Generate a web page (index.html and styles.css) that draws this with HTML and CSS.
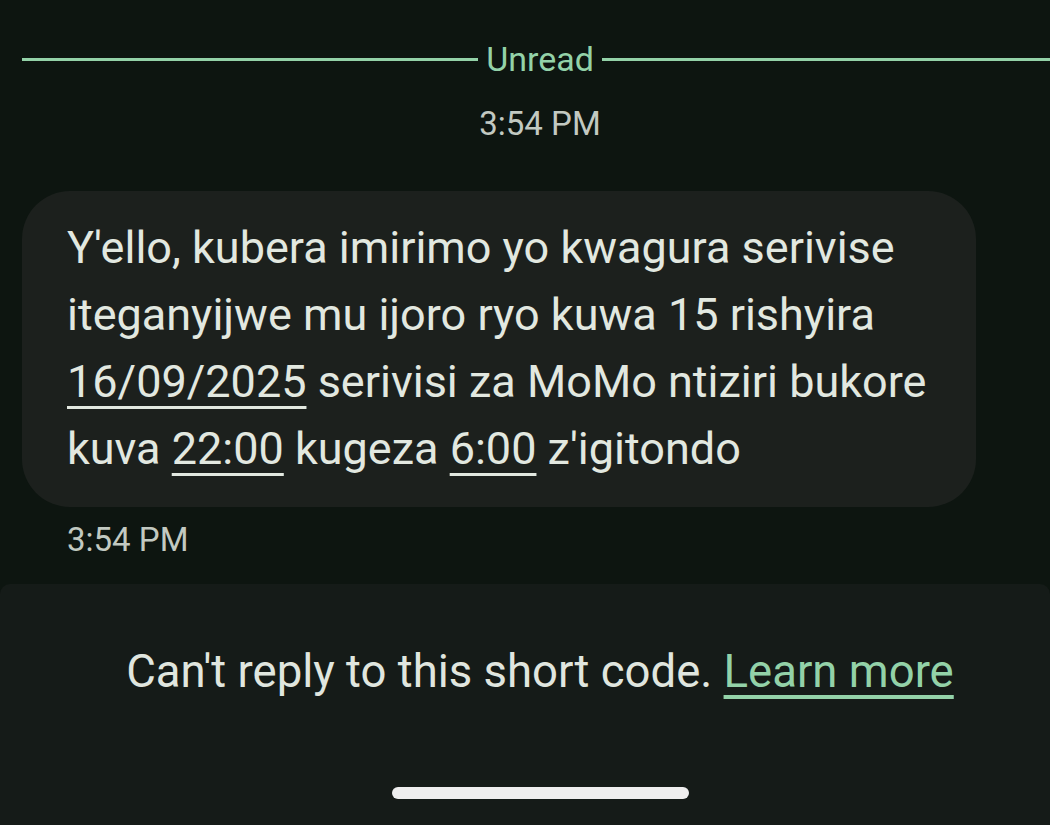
FILE: index.html
```html
<!DOCTYPE html>
<html>
<head>
  <title>Messages</title>
  <link rel="stylesheet" href="styles.css">
</head>
<body>
  <div class="thread">
    <div class="unread-divider">
      <span class="divider-line"></span>
      <span class="divider-label">Unread</span>
      <span class="divider-line"></span>
    </div>
    <div class="day-time">3:54 PM</div>
    <div class="bubble">
      Y'ello, kubera imirimo yo kwagura serivise iteganyijwe mu ijoro ryo kuwa 15 rishyira
      <span class="link">16/09/2025</span> serivisi za MoMo ntiziri bukore kuva
      <span class="link">22:00</span> kugeza <span class="link">6:00</span> z'igitondo
    </div>
    <div class="msg-time">3:54 PM</div>
  </div>
  <div class="reply-panel">
    <p class="reply-note">Can't reply to this short code. <a class="learn-more" href="#">Learn more</a></p>
    <div class="home-bar"></div>
  </div>
</body>
</html>
```

FILE: styles.css
```css
html, body {
  height: 100%;
}
body {
  font-family: Roboto, "Noto Sans", sans-serif;
  background-color: #0d1510;
  color: #e0e6df;
  margin: 0;
  display: flex;
  flex-direction: column;
  overflow: hidden;
}

/* the screen is 1080 wide, cropped at 1050: centre things on 540 */
.thread {
  flex: 1;
  padding: 0 0 0 22px;
}
.unread-divider {
  display: flex;
  align-items: center;
  gap: 8px;
  margin-top: 40px;
  height: 38px;
}
.divider-line {
  flex: 1;
  height: 3px;
  background: #93d2a8;
}
.divider-line:last-child {
  margin-right: -8px;
}
.divider-label {
  color: #93d2a8;
  font-size: 34px;
}
.day-time {
  text-align: center;
  color: #c2c9c1;
  font-size: 33px;
  line-height: 40px;
  margin: 26px -30px 0 -22px;
}
.bubble {
  width: 864px;
  margin-top: 47px;
  padding: 23px 45px 25px 45px;
  background: #1c201d;
  border-radius: 48px;
  font-size: 45px;
  line-height: 67px;
  color: #e2e8e0;
}
.link {
  text-decoration: underline;
  text-decoration-thickness: 3px;
  text-underline-offset: 9px;
}
.msg-time {
  color: #c2c9c1;
  font-size: 33px;
  line-height: 40px;
  margin: 13px 0 0 45px;
}

.reply-panel {
  height: 241px;
  padding-left: 30px;
  background: #151b18;
  border-radius: 10px 10px 0 0;
  display: flex;
  flex-direction: column;
  align-items: center;
}
.reply-note {
  margin: 61px 0 0 0;
  font-size: 45.5px;
  line-height: 53px;
  color: #e0e6df;
}
.learn-more {
  color: #93d2a8;
  text-decoration: underline;
  text-decoration-thickness: 4px;
  text-underline-offset: 8px;
}
.home-bar {
  margin-top: 89px;
  width: 297px;
  height: 12px;
  border-radius: 6px;
  background: #eeeeee;
}
```
